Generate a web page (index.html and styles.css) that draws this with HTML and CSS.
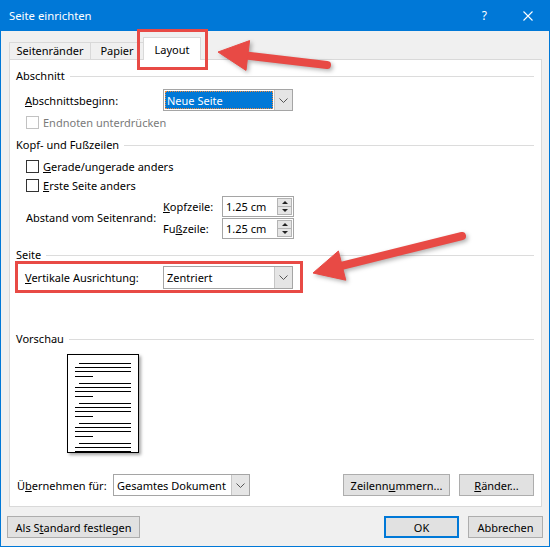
FILE: index.html
```html
<!DOCTYPE html>
<html lang="de">

<head>
  <meta charset="UTF-8">
  <meta name="viewport" content="width=device-width, initial-scale=1.0">
  <title>Seite einrichten</title>
  <link rel="stylesheet" href="styles.css">
</head>

<body>
  <div class="window">
    <div class="titlebar">
      <span class="title">Seite einrichten</span>
      <span class="help">?</span>
      <svg class="close" width="10" height="10" viewBox="0 0 10 10">
        <path d="M0.5 0.5 L9.5 9.5 M9.5 0.5 L0.5 9.5" stroke="#fff" stroke-width="1.1" />
      </svg>
    </div>

    <div class="tabs">
      <div class="tab tab-margins">Seitenränder</div>
      <div class="tab tab-paper">Papier</div>
      <div class="tab tab-active">Layout<span class="mark-tab"></span></div>
    </div>

    <div class="panel">
      <!-- Abschnitt -->
      <div class="group group-first">Abschnitt</div>
      <div class="row row-start">
        <span class="lbl"><u>A</u>bschnittsbeginn:</span>
        <div class="combo">
          <span class="value"><span class="selected">Neue Seite</span></span>
          <span class="drop">
            <svg width="9" height="5" viewBox="0 0 9 5"><path d="M0.5 0.5 L4.5 4.5 L8.5 0.5" fill="none" stroke="#555" /></svg>
          </span>
        </div>
      </div>
      <div class="check check-endnotes disabled">
        <span class="box"></span>Endnoten unterdrücken
      </div>

      <!-- Kopf- und Fußzeilen -->
      <div class="group group-header">Kopf- und Fußzeilen</div>
      <div class="check check-odd">
        <span class="box"></span><span><u>G</u>erade/ungerade anders</span>
      </div>
      <div class="check check-first">
        <span class="box"></span><span><u>E</u>rste Seite anders</span>
      </div>
      <div class="dist">
        <span class="dist-label">Abstand vom Seitenrand:</span>
        <span><u>K</u>opfzeile:</span>
        <div class="spin">
          <span class="num">1.25 cm</span>
          <span class="btns"><span class="up"></span><span class="down"></span></span>
        </div>
        <span>Fu<u>ß</u>zeile:</span>
        <div class="spin">
          <span class="num">1.25 cm</span>
          <span class="btns"><span class="up"></span><span class="down"></span></span>
        </div>
      </div>

      <!-- Seite -->
      <div class="group group-page">Seite</div>
      <div class="mark-row">
        <span class="lbl"><u>V</u>ertikale Ausrichtung:</span>
        <div class="combo combo-tall">
          <span class="value">Zentriert</span>
          <span class="drop">
            <svg width="9" height="5" viewBox="0 0 9 5"><path d="M0.5 0.5 L4.5 4.5 L8.5 0.5" fill="none" stroke="#555" /></svg>
          </span>
        </div>
      </div>

      <!-- Vorschau -->
      <div class="group group-preview">Vorschau</div>
      <div class="sheet">
        <div class="para"><i class="ln first"></i><i class="ln"></i><i class="ln"></i><i class="ln short"></i></div>
        <div class="para"><i class="ln first"></i><i class="ln"></i><i class="ln"></i><i class="ln short"></i></div>
        <div class="para"><i class="ln first"></i><i class="ln"></i><i class="ln"></i><i class="ln short"></i></div>
        <div class="para"><i class="ln first"></i><i class="ln"></i><i class="ln"></i><i class="ln short"></i></div>
        <div class="para"><i class="ln first"></i><i class="ln"></i><i class="ln"></i><i class="ln short"></i></div>
      </div>

      <div class="apply">
        <span class="apply-label">Ü<u>b</u>ernehmen für:</span>
        <div class="combo combo-apply">
          <span class="value">Gesamtes Dokument</span>
          <span class="drop">
            <svg width="9" height="5" viewBox="0 0 9 5"><path d="M0.5 0.5 L4.5 4.5 L8.5 0.5" fill="none" stroke="#555" /></svg>
          </span>
        </div>
        <button class="btn btn-lines">Zeilenn<u>u</u>mmern...</button>
        <button class="btn btn-borders"><u>R</u>änder...</button>
      </div>
    </div>

    <div class="footer">
      <button class="btn btn-default">Als S<u>t</u>andard festlegen</button>
      <div class="footer-right">
        <button class="btn btn-ok">OK</button>
        <button class="btn btn-cancel">Abbrechen</button>
      </div>
    </div>

    <!-- red annotation arrows -->
    <svg class="arrows" width="550" height="547" viewBox="0 0 550 547">
      <g fill="#e84a45" stroke="#e84a45">
        <path d="M327 65 L246 55.5" stroke-width="8" stroke-linecap="round" fill="none" />
        <polygon points="218,52 249.6,40.6 246,70.4" stroke-width="1" stroke-linejoin="round" />
        <path d="M462 236 L341 266" stroke-width="8" stroke-linecap="round" fill="none" />
        <polygon points="313,273 338.4,251 345.8,280.2" stroke-width="1" stroke-linejoin="round" />
      </g>
    </svg>
  </div>
</body>

</html>
```

FILE: styles.css
```css
body {
  margin: 0;
  font-family: "Noto Sans", sans-serif;
  font-size: 11px;
  color: #000;
}

u {
  text-decoration-thickness: 1px;
  text-underline-offset: 1px;
}

.window {
  position: relative;
  width: 550px;
  height: 547px;
  box-sizing: border-box;
  border: 1px solid #0078d7;
  border-top: none;
  background-color: #f0f0f0;
  overflow: hidden;
}

/* title bar */
.titlebar {
  display: flex;
  align-items: center;
  height: 31px;
  padding-left: 8px;
  background-color: #0078d7;
  color: #fff;
}

.title {
  font-size: 11.3px;
}

.help {
  margin-left: auto;
  margin-right: 36px;
  font-size: 12px;
  padding-bottom: 1px;
}

.close {
  margin-right: 16px;
}

/* tabs */
.tabs {
  display: flex;
  align-items: flex-end;
  height: 22px;
  margin-top: 6px;
  padding-left: 8px;
}

.tab {
  box-sizing: border-box;
  height: 17px;
  line-height: 16px;
  border: 1px solid #d9d9d9;
  border-bottom: none;
  text-align: center;
  background-color: #f0f0f0;
}

.tab-margins {
  width: 82px;
}

.tab-paper {
  width: 54px;
  margin-left: -1px;
}

.tab-active {
  position: relative;
  z-index: 2;
  width: 58px;
  height: 23px;
  margin-left: -1px;
  margin-bottom: -1px;
  padding-top: 4px;
  background-color: #fff;
}

.mark-tab {
  position: absolute;
  left: -7px;
  top: -9px;
  width: 71px;
  height: 41px;
  box-sizing: border-box;
  border: 3px solid #e84a45;
}

/* main panel */
.panel {
  width: 533px;
  height: 448px;
  box-sizing: border-box;
  margin-left: 8px;
  padding: 0 7px 0 6px;
  border: 1px solid #d9d9d9;
  background-color: #fff;
}

.group {
  display: flex;
  align-items: center;
  height: 16px;
  line-height: 16px;
}

.group::after {
  content: "";
  flex: 1;
  height: 1px;
  margin-left: 5px;
  background-color: #dcdcdc;
}

.group-first {
  margin-top: 8px;
}

.group-header {
  margin-top: 7px;
}

.group-page {
  margin-top: 8px;
}

.group-preview {
  margin-top: 38px;
}

.row {
  display: flex;
  align-items: center;
  height: 22px;
  padding-left: 9px;
}

.row-start {
  margin-top: 5px;
}

.lbl {
  width: 138px;
}

.combo {
  display: flex;
  width: 130px;
  height: 22px;
  box-sizing: border-box;
  border: 1px solid #a5a5a5;
  background-color: #fff;
}

.combo-tall {
  height: 23px;
}

.combo .value {
  flex: 1;
  display: flex;
  align-items: center;
  padding-left: 3px;
}

.row .combo .value {
  padding: 1px;
}

.selected {
  flex: 1;
  align-self: stretch;
  display: flex;
  align-items: center;
  padding-left: 2px;
  background-color: #0078d7;
  color: #fff;
  outline: 1px dotted #f08a3a;
  outline-offset: -1px;
}

.drop {
  display: flex;
  align-items: center;
  justify-content: center;
  width: 17px;
  border-left: 1px solid #c6c6c6;
  background-color: #e5e5e5;
}

/* check boxes */
.check {
  display: flex;
  align-items: center;
  height: 16px;
  padding-left: 10px;
}

.box {
  width: 13px;
  height: 13px;
  box-sizing: border-box;
  margin-right: 4px;
  border: 1px solid #333;
  background-color: #fff;
}

.check-endnotes {
  margin-top: 3px;
}

.check-odd {
  margin-top: 5px;
}

.check-first {
  margin-top: 3px;
}

.disabled {
  color: #7a7a7a;
}

.disabled .box {
  border-color: #c2c2c2;
}

/* distance inputs */
.dist {
  display: grid;
  grid-template-columns: 137px 59px 72px;
  grid-template-rows: 21px 21px;
  row-gap: 1px;
  align-items: center;
  margin-top: 3px;
  padding-left: 10px;
}

.dist-label {
  grid-row: 1 / 3;
}

.spin {
  display: flex;
  height: 21px;
  box-sizing: border-box;
  border: 1px solid #a5a5a5;
  background-color: #fff;
}

.spin .num {
  flex: 1;
  padding-left: 3px;
  line-height: 19px;
}

.btns {
  display: flex;
  flex-direction: column;
  width: 15px;
  padding: 1px 1px 1px 0;
}

.btns span {
  flex: 1;
  display: flex;
  align-items: center;
  justify-content: center;
  border: 1px solid #b4b4b4;
  background-color: #e5e5e5;
}

.btns .down {
  border-top: none;
}

.btns .up::before {
  content: "";
  border-left: 3px solid transparent;
  border-right: 3px solid transparent;
  border-bottom: 3px solid #222;
}

.btns .down::before {
  content: "";
  border-left: 3px solid transparent;
  border-right: 3px solid transparent;
  border-top: 3px solid #222;
}

/* highlighted row */
.mark-row {
  display: flex;
  align-items: center;
  width: 288px;
  height: 32px;
  box-sizing: border-box;
  margin-top: -2px;
  margin-left: -1px;
  padding-left: 7px;
  border: 3px solid #e84a45;
}

/* preview sheet */
.sheet {
  width: 72px;
  height: 99px;
  box-sizing: border-box;
  margin-top: 7px;
  margin-left: 51px;
  padding: 8px 7px 0 7px;
  border: 1px solid #000;
  overflow: hidden;
  box-shadow: 2px 2px 3px rgba(0, 0, 0, 0.35);
}

.para {
  margin-bottom: 6px;
}

.ln {
  display: block;
  height: 1px;
  margin-top: 3px;
  background-color: #000;
}

.ln.first {
  margin-top: 0;
  margin-left: 4px;
}

.ln.short {
  width: 18px;
  margin-top: 4px;
}

/* bottom of the panel */
.apply {
  display: flex;
  align-items: center;
  height: 22px;
  margin-top: 21px;
  padding-left: 1px;
}

.apply-label {
  width: 96px;
}

.combo-apply {
  width: 137px;
}

.btn {
  display: flex;
  align-items: center;
  justify-content: center;
  height: 22px;
  box-sizing: border-box;
  padding: 0;
  border: 1px solid #adadad;
  background-color: #e1e1e1;
  font-family: inherit;
  font-size: inherit;
  color: #000;
}

.btn-lines {
  width: 107px;
  margin-left: auto;
}

.btn-borders {
  width: 75px;
  margin-left: 9px;
}

/* dialog buttons */
.footer {
  display: flex;
  justify-content: space-between;
  margin-top: 9px;
  padding: 0 6px;
}

.footer-right {
  display: flex;
  gap: 9px;
}

.btn-default {
  width: 133px;
}

.btn-ok,
.btn-cancel {
  width: 75px;
}

.btn-ok {
  border: 2px solid #0078d7;
}

.arrows {
  position: absolute;
  left: -1px;
  top: 0;
  pointer-events: none;
  filter: drop-shadow(2px 2px 2px rgba(0, 0, 0, 0.3));
}
```
